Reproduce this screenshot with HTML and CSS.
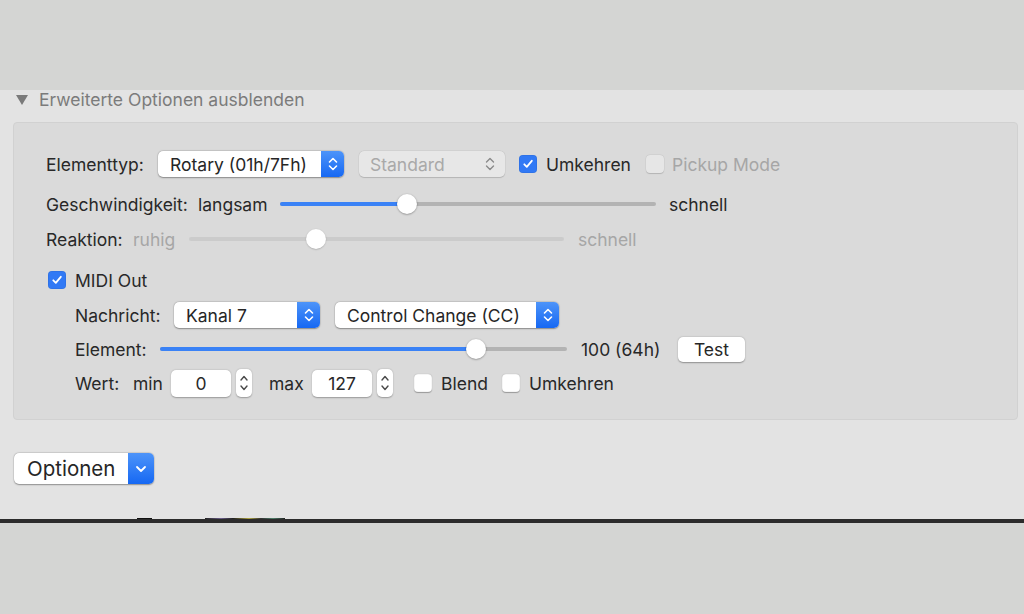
FILE: index.html
```html
<!DOCTYPE html>
<html>
<head>
<meta charset="utf-8">
<link rel="stylesheet" href="styles.css">
</head>
<body>
<div class="top"></div>
<div class="panel">
  <div class="disclosure"><span class="tri"></span><span class="disc-text">Erweiterte Optionen ausblenden</span></div>
  <div class="box">
    <div class="row r1">
      <span class="lbl w-type">Elementtyp:</span>
      <div class="popup w186">
        <span class="pop-text">Rotary (01h/7Fh)</span>
        <span class="pop-btn"><svg width="12" height="18" viewBox="0 0 12 18"><path d="M2.5 7 L6 3.5 L9.5 7 M2.5 11 L6 14.5 L9.5 11" fill="none" stroke="#fff" stroke-width="1.6" stroke-linecap="round" stroke-linejoin="round"/></svg></span>
      </div>
      <div class="popup disabled w146 ml15">
        <span class="pop-text">Standard</span>
        <span class="pop-btn"><svg width="12" height="18" viewBox="0 0 12 18"><path d="M2.5 7 L6 3.5 L9.5 7 M2.5 11 L6 14.5 L9.5 11" fill="none" stroke="#8a8a8a" stroke-width="1.4" stroke-linecap="round" stroke-linejoin="round"/></svg></span>
      </div>
      <span class="cb on ml14"><svg width="12" height="12" viewBox="0 0 12 12"><path d="M2.3 6.3 L4.8 8.8 L9.8 2.8" fill="none" stroke="#fff" stroke-width="1.8" stroke-linecap="round" stroke-linejoin="round"/></svg></span>
      <span class="cb-lbl">Umkehren</span>
      <span class="cb off dis ml15"></span>
      <span class="cb-lbl dim">Pickup Mode</span>
    </div>
    <div class="row r2">
      <span class="lbl w-speed">Geschwindigkeit:</span>
      <span class="lbl w-slow">langsam</span>
      <div class="slider" style="width:376px"><div class="fill" style="width:127px"></div><div class="knob" style="left:117px"></div></div>
      <span class="lbl ml13">schnell</span>
    </div>
    <div class="row r3">
      <span class="lbl w-react">Reaktion:</span>
      <span class="lbl dim w-calm">ruhig</span>
      <div class="slider dis" style="width:375px"><div class="knob" style="left:117px"></div></div>
      <span class="lbl dim ml14">schnell</span>
    </div>
    <div class="row r4">
      <span class="cb on ml2"><svg width="12" height="12" viewBox="0 0 12 12"><path d="M2.3 6.3 L4.8 8.8 L9.8 2.8" fill="none" stroke="#fff" stroke-width="1.8" stroke-linecap="round" stroke-linejoin="round"/></svg></span>
      <span class="cb-lbl">MIDI Out</span>
    </div>
    <div class="row r5 indent">
      <span class="lbl w-msg">Nachricht:</span>
      <div class="popup w146">
        <span class="pop-text">Kanal 7</span>
        <span class="pop-btn"><svg width="12" height="18" viewBox="0 0 12 18"><path d="M2.5 7 L6 3.5 L9.5 7 M2.5 11 L6 14.5 L9.5 11" fill="none" stroke="#fff" stroke-width="1.6" stroke-linecap="round" stroke-linejoin="round"/></svg></span>
      </div>
      <div class="popup w224 ml15">
        <span class="pop-text">Control Change (CC)</span>
        <span class="pop-btn"><svg width="12" height="18" viewBox="0 0 12 18"><path d="M2.5 7 L6 3.5 L9.5 7 M2.5 11 L6 14.5 L9.5 11" fill="none" stroke="#fff" stroke-width="1.6" stroke-linecap="round" stroke-linejoin="round"/></svg></span>
      </div>
    </div>
    <div class="row r6 indent">
      <span class="lbl w-elem">Element:</span>
      <div class="slider" style="width:407px"><div class="fill" style="width:316px"></div><div class="knob" style="left:306px"></div></div>
      <span class="lbl ml14 w-val">100 (64h)</span>
      <button class="btn">Test</button>
    </div>
    <div class="row r7 indent">
      <span class="lbl w-wert">Wert:</span>
      <span class="lbl w-min">min</span>
      <span class="field">0</span>
      <span class="stepper"><svg width="10" height="22" viewBox="0 0 10 22"><path d="M2 8 L5 4.5 L8 8 M2 14 L5 17.5 L8 14" fill="none" stroke="#4a4a4a" stroke-width="1.4" stroke-linecap="round" stroke-linejoin="round"/></svg></span>
      <span class="lbl w-max">max</span>
      <span class="field">127</span>
      <span class="stepper"><svg width="10" height="22" viewBox="0 0 10 22"><path d="M2 8 L5 4.5 L8 8 M2 14 L5 17.5 L8 14" fill="none" stroke="#4a4a4a" stroke-width="1.4" stroke-linecap="round" stroke-linejoin="round"/></svg></span>
      <span class="cb off ml21"></span>
      <span class="cb-lbl w-blend">Blend</span>
      <span class="cb off"></span>
      <span class="cb-lbl">Umkehren</span>
    </div>
  </div>
  <div class="bottom">
    <div class="popup big">
      <span class="pop-text">Optionen</span>
      <span class="pop-btn"><svg width="12" height="10" viewBox="0 0 12 10"><path d="M2 3 L6 7 L10 3" fill="none" stroke="#fff" stroke-width="1.8" stroke-linecap="round" stroke-linejoin="round"/></svg></span>
    </div>
  </div>
  <div class="artifacts"><span class="art a1"></span><span class="art a2"></span></div>
</div>
<div class="divider"></div>
<div class="rest"></div>
</body>
</html>
```
FILE: styles.css
```css
* { box-sizing: border-box; }
html, body { margin: 0; padding: 0; }
body {
  width: 1024px;
  height: 614px;
  overflow: hidden;
  background: #d4d5d3;
  font-family: "Inter", "Liberation Sans", sans-serif;
  font-size: 17.5px;
  color: #282828;
}
.top { height: 90px; background: #d4d5d3; }
.panel {
  position: relative;
  height: 429px;
  background: #e3e3e3;
}
.disclosure {
  height: 32px;
  display: flex;
  align-items: center;
  padding-left: 16px;
  padding-bottom: 13px;
  color: #7b7b7b;
}
.tri {
  width: 0; height: 0;
  border-left: 6.5px solid transparent;
  border-right: 6.5px solid transparent;
  border-top: 10px solid #7a7a7a;
  margin-right: 11px;
}
.box {
  margin-left: 13px;
  width: 1005px;
  height: 298px;
  background: #dadada;
  border: 1px solid #d1d1d1;
  border-radius: 4px;
  padding: 28px 0 0 32px;
}
.row { display: flex; align-items: center; height: 26px; white-space: nowrap; }
.r2 { margin-top: 14px; }
.r3 { margin-top: 9px; }
.r4 { margin-top: 15px; }
.r5 { margin-top: 9px; }
.r6 { margin-top: 8px; }
.r7 { margin-top: 8px; }
.indent { padding-left: 29px; }
.lbl { display: inline-block; }
.dim { color: #a6a6a6; }
.w-type { width: 112px; }
.w-speed { width: 152px; }
.w-slow { width: 82px; }
.w-react { width: 87px; }
.w-calm { width: 56px; }
.w-msg { width: 99px; }
.w-elem { width: 85px; }
.w-val { width: 97px; }
.w-wert { width: 58px; }
.w-min { width: 38px; }
.w-max { width: 43px; margin-left: 17px; }
.w-blend { width: 61px; }
.ml2 { margin-left: 2px; }
.ml13 { margin-left: 13px; }
.ml14 { margin-left: 14px; }
.ml15 { margin-left: 15px; }
.ml21 { margin-left: 21px; }

.popup {
  display: flex;
  align-items: stretch;
  height: 26px;
  background: #fff;
  border-radius: 5px;
  box-shadow: 0 0.5px 1.5px rgba(0,0,0,0.35), 0 0 0 0.5px rgba(0,0,0,0.08);
  overflow: hidden;
}
.w186 { width: 186px; }
.w146 { width: 146px; }
.w224 { width: 224px; }
.pop-text {
  flex: 1;
  display: flex;
  align-items: center;
  padding-left: 12px;
  color: #262626;
}
.pop-btn {
  width: 23px;
  display: flex;
  align-items: center;
  justify-content: center;
  background: linear-gradient(#4d94f9, #1668f3);
}
.popup.disabled { background: #e7e7e7; box-shadow: 0 0.5px 1px rgba(0,0,0,0.15), 0 0 0 0.5px rgba(0,0,0,0.05); }
.popup.disabled .pop-text { color: #a9a9a9; padding-left: 11px; }
.popup.disabled .pop-btn { background: transparent; width: 26px; padding-right: 4px; }

.cb {
  width: 18px; height: 18px;
  border-radius: 4px;
  display: inline-flex;
  align-items: center;
  justify-content: center;
  flex: none;
}
.cb.on { background: #3179f5; box-shadow: inset 0 0 0 0.5px rgba(0,0,0,0.1); }
.cb.off { background: #fff; box-shadow: 0 0.5px 1px rgba(0,0,0,0.3), inset 0 0 0 0.5px rgba(0,0,0,0.08); }
.cb.off.dis { background: #e6e6e6; box-shadow: 0 0.5px 1px rgba(0,0,0,0.15), 0 0 0 0.5px rgba(0,0,0,0.05); }
.cb-lbl { margin-left: 9px; }
.cb-lbl.dim { margin-left: 8px; }

.slider {
  position: relative;
  height: 4px;
  border-radius: 2px;
  background: #b3b3b3;
  flex: none;
}
.slider.dis { background: #cbcbcb; }
.fill { height: 4px; border-radius: 2px; background: #3a82f6; }
.knob {
  position: absolute;
  top: -8px;
  width: 20px; height: 20px;
  border-radius: 50%;
  background: #fff;
  box-shadow: 0 0.5px 2px rgba(0,0,0,0.4);
}
.slider.dis .knob { box-shadow: 0 0.5px 1.5px rgba(0,0,0,0.25); }

.btn {
  width: 67px; height: 25px;
  border: none;
  border-radius: 5px;
  background: #fff;
  box-shadow: 0 0.5px 1.5px rgba(0,0,0,0.35);
  font: inherit;
  color: #262626;
  padding: 0;
  margin-left: 0;
}
.field {
  width: 60px; height: 27px;
  background: #fff;
  border-radius: 5px;
  box-shadow: 0 0.5px 1.5px rgba(0,0,0,0.3);
  display: flex;
  align-items: center;
  justify-content: center;
}
.stepper {
  width: 16px; height: 28px;
  margin-left: 5px;
  background: #fff;
  border-radius: 5px;
  box-shadow: 0 0.5px 1.5px rgba(0,0,0,0.3);
  display: flex;
  align-items: center;
  justify-content: center;
}
.bottom { margin-top: 33px; padding-left: 14px; }
.popup.big { width: 140px; height: 31px; font-size: 20.5px; border-radius: 5px; }
.popup.big .pop-text { padding-left: 13px; }
.popup.big .pop-btn { width: 26px; }

.artifacts { position: absolute; left: 0; bottom: 0; width: 300px; height: 2px; }
.art { position: absolute; bottom: 0; height: 1px; background: #111; }
.a1 { left: 137px; width: 15px; }
.a2 { left: 205px; width: 80px; background: linear-gradient(90deg, #222, #6b5e8a 20%, #222 35%, #b0a540 55%, #333 70%, #4f7f6a 85%, #222); }

.divider { height: 4px; background: #2c2c2c; }
.rest { height: 91px; background: #d4d5d3; }
```
